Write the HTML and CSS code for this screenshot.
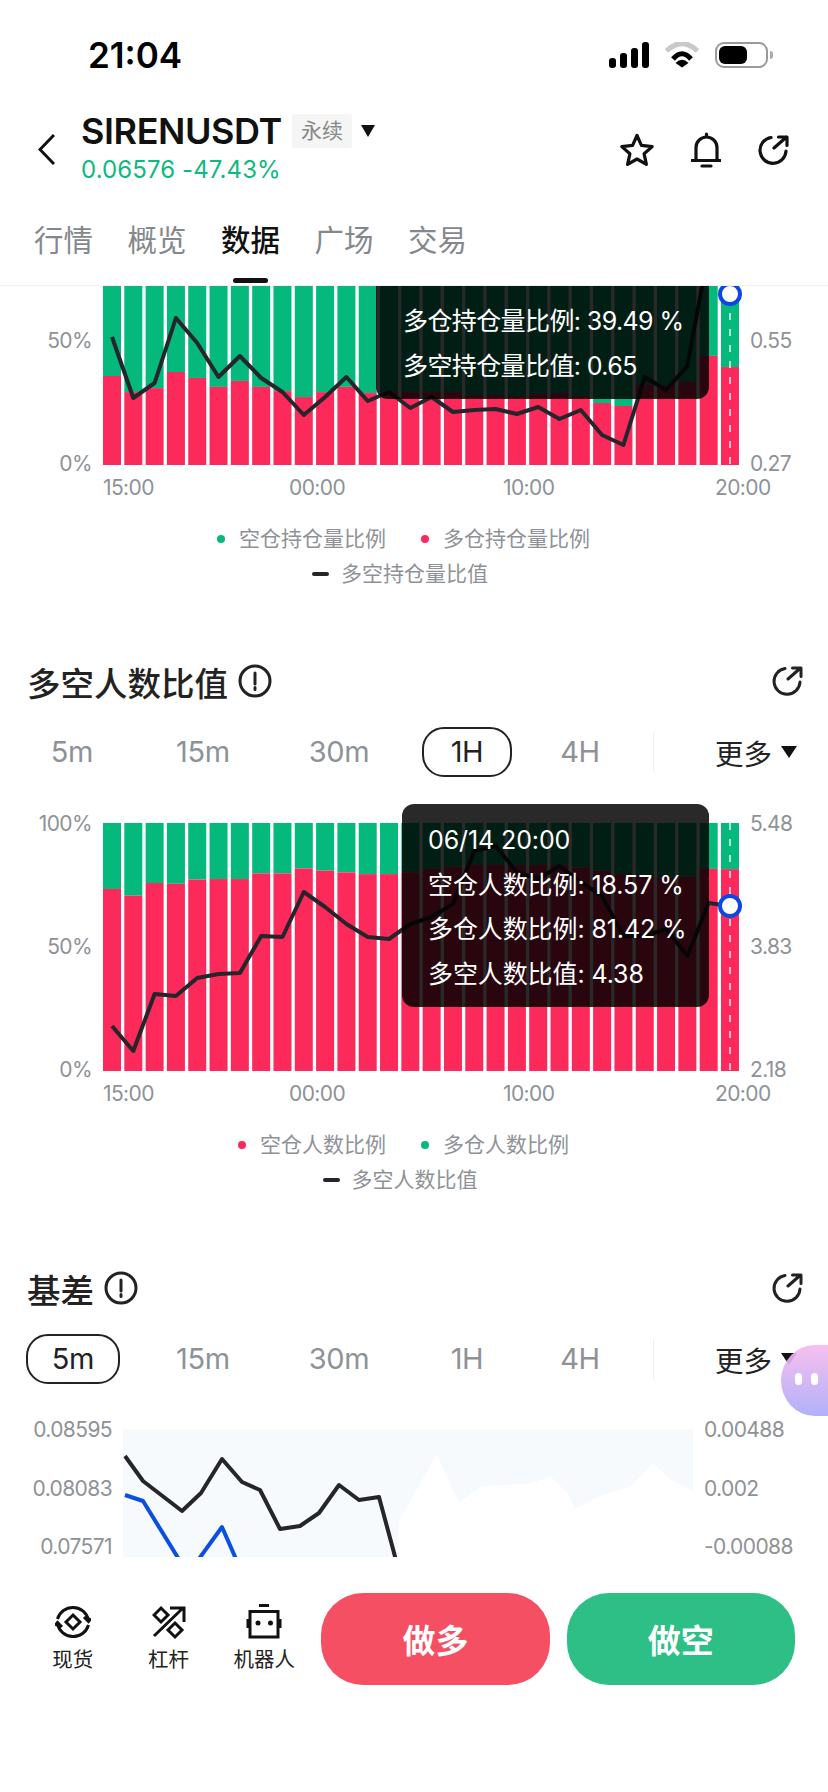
FILE: index.html
```html
<!DOCTYPE html>
<html lang="zh-CN">
<head>
  <meta charset="UTF-8" />
  <title>SIRENUSDT 数据</title>
  <meta name="viewport" content="width=device-width, initial-scale=1.0">
  <link rel="stylesheet" href="styles.css">
</head>
<body>
  <svg class="defs" width="0" height="0">
    <symbol id="share" viewBox="0 0 32 30">
      <path d="M14 2.500A13 13 0 1 0 29 16" />
      <path d="M17 13L29.500 2M21.500 2H30V10.500" />
    </symbol>
    <symbol id="info" viewBox="0 0 34 34">
      <circle cx="17" cy="17" r="15" />
      <path d="M17 9V20M17 23.500V25.500" />
    </symbol>
  </svg>

  <div class="page">
    <header class="top">
      <div class="status">
        <span class="time">21:04</span>
        <div class="status-icons">
          <div class="signal"><i></i><i></i><i></i><i></i></div>
          <svg class="wifi" width="34" height="26" viewBox="0 0 34 26">
            <path d="M1.500 9Q17 -6 32.500 9" fill="none" stroke="#c9c9c9" stroke-width="5" />
            <path d="M8 17Q17 6.500 26 17" fill="none" stroke="#000" stroke-width="5" />
            <path d="M10.500 21Q17 14.500 23.500 21L17 25.500Z" />
          </svg>
          <div class="battery"><i></i></div>
        </div>
      </div>

      <div class="nav">
        <svg class="back" width="17" height="31" viewBox="0 0 17 31">
          <path d="M16 1L2 15.500L16 30" />
        </svg>
        <div class="symbol">
          <div class="symbol-row">
            <h1>SIRENUSDT</h1>
            <span class="badge">永续</span>
            <span class="caret"></span>
          </div>
          <div class="price">0.06576 -47.43%</div>
        </div>
        <div class="nav-icons">
          <svg class="line-icon" width="36" height="34" viewBox="0 0 36 34">
            <path d="M18 2.500L22.400 12.400L33.200 13.600L25.100 20.800L27.400 31.400L18 26L8.600 31.400L10.900 20.800L2.800 13.600L13.600 12.400Z" />
          </svg>
          <svg class="line-icon" width="30" height="36" viewBox="0 0 30 36">
            <path d="M5 28V15.500a10.500 10.500 0 0 1 21 0V28M0.500 28.500H29.500M15.500 2V4.500M11 34H20" />
          </svg>
          <svg class="line-icon" width="32" height="30"><use href="#share" /></svg>
        </div>
      </div>

      <nav class="tabs">
        <a>行情</a>
        <a>概览</a>
        <a class="active">数据</a>
        <a>广场</a>
        <a>交易</a>
      </nav>
    </header>

    <main class="scroll">
      <section class="section-first">
        <div class="chart">
          <div class="axis axis-left"><span></span><span>50%</span><span>0%</span></div>
          <div class="plot">
            <svg id="holdChart" class="bars" viewBox="0 0 636 248"></svg>
            <div class="tooltip tooltip-hold">
              <div>多仓持仓量比例: 39.49 %</div>
              <div>多空持仓量比值: 0.65</div>
            </div>
          </div>
          <div class="axis axis-right"><span></span><span>0.55</span><span>0.27</span></div>
          <div class="x-axis"><span>15:00</span><span>00:00</span><span>10:00</span><span>20:00</span></div>
        </div>
        <div class="legend">
          <div class="legend-row">
            <span class="legend-item"><i class="dot dot-green"></i>空仓持仓量比例</span>
            <span class="legend-item"><i class="dot dot-red"></i>多仓持仓量比例</span>
          </div>
          <div class="legend-row">
            <span class="legend-item"><i class="dash"></i>多空持仓量比值</span>
          </div>
        </div>
      </section>

      <section class="section">
        <div class="section-head">
          <h2>多空人数比值</h2>
          <svg class="line-icon head-info" width="34" height="34"><use href="#info" /></svg>
          <svg class="line-icon head-share" width="32" height="30"><use href="#share" /></svg>
        </div>
        <div class="intervals">
          <span class="interval"><b>5m</b></span>
          <span class="interval"><b>15m</b></span>
          <span class="interval"><b>30m</b></span>
          <span class="interval active"><b>1H</b></span>
          <span class="interval"><b>4H</b></span>
          <span class="divider"></span>
          <span class="more">更多<span class="caret"></span></span>
        </div>
        <div class="chart">
          <div class="axis axis-left"><span>100%</span><span>50%</span><span>0%</span></div>
          <div class="plot">
            <svg id="peopleChart" class="bars" viewBox="0 0 636 248"></svg>
            <div class="tooltip tooltip-people">
              <div>06/14 20:00</div>
              <div>空仓人数比例: 18.57 %</div>
              <div>多仓人数比例: 81.42 %</div>
              <div>多空人数比值: 4.38</div>
            </div>
          </div>
          <div class="axis axis-right"><span>5.48</span><span>3.83</span><span>2.18</span></div>
          <div class="x-axis"><span>15:00</span><span>00:00</span><span>10:00</span><span>20:00</span></div>
        </div>
        <div class="legend">
          <div class="legend-row">
            <span class="legend-item"><i class="dot dot-red"></i>空仓人数比例</span>
            <span class="legend-item"><i class="dot dot-green"></i>多仓人数比例</span>
          </div>
          <div class="legend-row">
            <span class="legend-item"><i class="dash"></i>多空人数比值</span>
          </div>
        </div>
      </section>

      <section class="section section-basis">
        <div class="section-head">
          <h2>基差</h2>
          <svg class="line-icon head-info" width="34" height="34"><use href="#info" /></svg>
          <svg class="line-icon head-share" width="32" height="30"><use href="#share" /></svg>
        </div>
        <div class="intervals">
          <span class="interval active"><b>5m</b></span>
          <span class="interval"><b>15m</b></span>
          <span class="interval"><b>30m</b></span>
          <span class="interval"><b>1H</b></span>
          <span class="interval"><b>4H</b></span>
          <span class="divider"></span>
          <span class="more">更多<span class="caret"></span></span>
        </div>
        <div class="basis-chart">
          <div class="basis-axis basis-left"><span>0.08595</span><span>0.08083</span><span>0.07571</span></div>
          <svg class="basis-plot" width="570" height="128" viewBox="0 0 570 128">
            <path fill="#fff" d="M272 128L277 90L314 25L329 60L337 73L359 57L404 55L428 48L445 65L452 80L477 67L507 58L530 35L547 50L570 62V128Z" />
            <polyline class="line-dark" points="2,27 20,52 59,82 78,64 99,30 119,53 137,61 157,100 177,97 196,84 216,56 236,71 256,68 277,146" />
            <polyline class="line-blue" points="2,66 20,72 65,145 99,98 120,146" />
          </svg>
          <div class="basis-axis basis-right"><span>0.00488</span><span>0.002</span><span>-0.00088</span></div>
        </div>
      </section>
    </main>

    <footer class="tradebar">
      <div class="tool">
        <svg class="line-icon" width="36" height="36" viewBox="0 0 36 36">
          <path d="M2.500 15A16 16 0 0 1 33.500 16M29 13L33.500 17.500L36 14.500M33.500 21A16 16 0 0 1 2.500 20M0 21.500L2.500 18.500L7 23" />
          <path d="M18 11L25 18L18 25L11 18Z" />
        </svg>
        <span>现货</span>
      </div>
      <div class="tool">
        <svg class="line-icon" width="34" height="36" viewBox="0 -2 34 36">
          <path d="M2 30L31 2M18 2H32V16M9 2L16 9L9 16L2 9ZM23 17L30 24L23 31L16 24Z" />
        </svg>
        <span>杠杆</span>
      </div>
      <div class="tool">
        <svg class="line-icon" width="36" height="36" viewBox="0 0 36 36">
          <path d="M4 7.500H32V33H4ZM13 1.500H23M2 15V24M34 15V24" />
          <circle class="eye" cx="12" cy="19" r="2.500" />
          <circle class="eye" cx="24.500" cy="19" r="2.500" />
        </svg>
        <span>机器人</span>
      </div>
      <button class="trade trade-long">做多</button>
      <button class="trade trade-short">做空</button>
    </footer>

    <div class="assistant"><i></i><i></i></div>
  </div>

  <script src="chart.js"></script>
</body>
</html>
```

FILE: styles.css
```css
* {
  box-sizing: border-box;
}
body {
  margin: 0;
  background: white;
  color: #222;
  font-family: Inter, "Noto Sans CJK SC", sans-serif;
}
h1, h2 {
  margin: 0;
}
.defs {
  position: absolute;
}
.page {
  position: relative;
  width: 828px;
  height: 1792px;
  display: flex;
  flex-direction: column;
  overflow: hidden;
}
.line-icon {
  fill: none;
  stroke: #111;
  stroke-width: 3.2;
  stroke-linejoin: round;
  stroke-linecap: round;
  flex: none;
}

/* top */
.top {
  height: 286px;
  flex: none;
  border-bottom: 1px solid #f1f1f1;
  background: white;
}
.status {
  height: 110px;
  padding: 0 60px 0 88px;
  display: flex;
  align-items: center;
  justify-content: space-between;
}
.time {
  font-size: 35px;
  font-weight: 600;
  color: #000;
}
.status-icons {
  display: flex;
  align-items: center;
  gap: 16px;
}
.signal {
  display: flex;
  align-items: flex-end;
  gap: 4px;
  height: 26px;
}
.signal i {
  width: 7px;
  background: #000;
  border-radius: 3px;
}
.signal i:nth-child(1) { height: 10px; }
.signal i:nth-child(2) { height: 15px; }
.signal i:nth-child(3) { height: 20px; }
.signal i:nth-child(4) { height: 26px; }
.battery {
  position: relative;
  width: 53px;
  height: 26px;
  border: 2px solid #9a9a9a;
  border-radius: 9px;
  padding: 2px;
}
.battery::after {
  content: "";
  position: absolute;
  left: 53px;
  top: 7px;
  width: 3px;
  height: 8px;
  background: #aaa;
  border-radius: 0 3px 3px 0;
}
.battery i {
  display: block;
  width: 28px;
  height: 18px;
  background: #000;
  border-radius: 6px;
}

.nav {
  height: 78px;
  padding: 0 39px 0 38px;
  display: flex;
  align-items: center;
}
.back {
  fill: none;
  stroke: #111;
  stroke-width: 3;
  flex: none;
  margin-right: 26px;
}
.symbol-row {
  display: flex;
  align-items: center;
}
.symbol h1 {
  font-size: 36px;
  font-weight: 600;
  line-height: 40px;
  color: #111;
  letter-spacing: -0.4px;
}
.badge {
  margin-left: 10px;
  padding: 0 9px;
  height: 34px;
  line-height: 34px;
  background: #f5f5f5;
  border-radius: 3px;
  color: #888;
  font-size: 21px;
}
.symbol-row .caret {
  margin-left: 9px;
  border-left-width: 7.500px;
  border-right-width: 7.500px;
}
.caret {
  display: inline-block;
  border-left: 8px solid transparent;
  border-right: 8px solid transparent;
  border-top: 12px solid #111;
}
.price {
  margin-top: 2px;
  font-size: 24px;
  line-height: 34px;
  color: #0fb880;
  letter-spacing: 0.1px;
}
.nav-icons {
  margin-left: auto;
  margin-top: 2px;
  display: flex;
  align-items: center;
  gap: 36px;
}

.tabs {
  margin-top: 34px;
  padding-left: 34px;
  display: flex;
  gap: 34.500px;
}
.tabs a {
  display: flex;
  flex-direction: column;
  align-items: center;
  font-size: 29.500px;
  line-height: 36px;
  color: #84888d;
}
.tabs a.active {
  color: #111;
  font-weight: 500;
}
.tabs a.active::after {
  content: "";
  width: 35px;
  height: 5px;
  margin-top: 20px;
  background: #111;
  border-radius: 3px;
}

/* charts */
.scroll {
  flex: 1;
  overflow: hidden;
}
.section-first {
  margin-top: -69px;
}
.section {
  margin-top: 73px;
}
.section-head {
  height: 40px;
  padding: 0 25px 0 27px;
  display: flex;
  align-items: center;
  gap: 10px;
}
.section-head h2 {
  font-size: 33.500px;
  font-weight: 500;
  color: #222;
}
.head-info {
  stroke: #222;
  stroke-width: 3;
}
.head-share {
  margin-left: auto;
  stroke: #222;
  stroke-width: 3;
}
.intervals {
  margin-top: 26px;
  padding: 0 31px 0 26px;
  height: 50px;
  display: grid;
  grid-template-columns: 92px 170px 102px 154px 72px 74px 1fr;
  align-items: center;
  justify-items: center;
  font-size: 29px;
  letter-spacing: -0.3px;
  color: #8e9297;
}
.interval b {
  display: block;
  min-width: 90px;
  height: 50px;
  line-height: 46px;
  text-align: center;
  font-weight: 400;
  border: 2px solid transparent;
  border-radius: 22px;
}
.interval.active b {
  border-color: #222;
  color: #222;
}
.section-basis .interval.active b {
  min-width: 94px;
  margin-left: 2px;
}
.divider {
  width: 1px;
  height: 40px;
  background: #eee;
}
.more {
  justify-self: end;
  display: flex;
  align-items: center;
  gap: 9px;
  font-size: 28.500px;
  letter-spacing: 0;
  color: #222;
}
.chart {
  margin-top: 46px;
  display: grid;
  grid-template-columns: 103px 636px 89px;
}
.section-first .chart {
  margin-top: 0;
}
.axis {
  margin: -12px 0 -12px;
  display: flex;
  flex-direction: column;
  justify-content: space-between;
  font-size: 21px;
  letter-spacing: -0.6px;
  color: #8e9297;
}
.axis span {
  height: 26px;
  line-height: 26px;
}
.axis-left {
  text-align: right;
  padding-right: 11px;
}
.axis-right {
  padding-left: 11px;
}
.plot {
  position: relative;
  height: 248px;
}
.bars {
  display: block;
  width: 636px;
  height: 248px;
  overflow: visible;
}
.x-axis {
  grid-column: 2 / 4;
  margin-top: 11px;
  display: grid;
  grid-template-columns: 186px 214px 212px auto;
  font-size: 21px;
  letter-spacing: -0.6px;
  line-height: 24px;
  color: #8e9297;
}
.tooltip {
  position: absolute;
  display: flex;
  flex-direction: column;
  justify-content: flex-end;
  padding-bottom: 11px;
  background: rgba(0, 0, 0, 0.84);
  border-radius: 12px;
  color: white;
  font-size: 25px;
  line-height: 44.500px;
}
.tooltip-hold {
  left: 273px;
  top: -21px;
  bottom: 66px;
  width: 333px;
  padding-left: 27px;
  letter-spacing: -0.6px;
}
.tooltip-people {
  left: 299px;
  top: -19px;
  width: 307px;
  height: 203px;
  padding-left: 26px;
  letter-spacing: -0.1px;
}
.legend {
  margin-top: 25px;
  padding-right: 21px;
  display: flex;
  flex-direction: column;
  gap: 7px;
  font-size: 21px;
  line-height: 28px;
  color: #8e9297;
}
.legend-row {
  display: flex;
  justify-content: center;
  gap: 35px;
}
.legend-row + .legend-row {
  padding-right: 7px;
}
.legend-item {
  display: flex;
  align-items: center;
}
.dot {
  width: 8px;
  height: 8px;
  margin-right: 14px;
  border-radius: 50%;
}
.dot-green { background: #05b87c; }
.dot-red { background: #fc2a5a; }
.dash {
  width: 17px;
  height: 4px;
  margin-right: 12px;
  background: #26252b;
  border-radius: 2px;
}

.section-basis {
  margin-top: 74px;
}
.basis-chart {
  margin-top: 45px;
  display: flex;
}
.basis-axis {
  margin-top: -9px;
  display: flex;
  flex-direction: column;
  gap: 38.500px;
  font-size: 21px;
  letter-spacing: -0.6px;
  line-height: 20px;
  color: #8e9297;
}
.basis-left {
  width: 123px;
  padding-right: 11px;
  text-align: right;
}
.basis-right {
  padding-left: 11px;
}
.basis-plot {
  flex: none;
  background: #f7fafd;
}
.line-dark, .line-blue {
  fill: none;
  stroke-width: 4;
  stroke-linejoin: round;
}
.line-dark { stroke: #26252b; }
.line-blue { stroke: #0b4fe0; }

/* bottom bar */
.tradebar {
  height: 234px;
  flex: none;
  padding: 35px 33px 0 25px;
  display: flex;
  align-items: flex-start;
  background: white;
}
.tool {
  width: 96px;
  height: 92px;
  padding-top: 11px;
  display: flex;
  flex-direction: column;
  align-items: center;
  font-size: 20.500px;
  line-height: 28px;
  color: #222;
}
.tool span {
  margin-top: 6px;
}
.tool .line-icon {
  stroke-width: 3;
  stroke-linecap: butt;
  stroke-linejoin: miter;
}
.eye {
  fill: #111;
  stroke: none;
}
.trade {
  width: 229px;
  height: 92px;
  border: none;
  border-radius: 42px;
  color: white;
  font-family: inherit;
  font-size: 33px;
  font-weight: 700;
}
.trade-long {
  margin-left: 9px;
  background: #f54f64;
}
.trade-short {
  margin-left: 17px;
  background: #2dbf85;
}

.assistant {
  position: absolute;
  right: 0;
  top: 1345px;
  width: 47px;
  height: 71px;
  padding: 28px 10px 0 14px;
  display: flex;
  justify-content: space-between;
  align-items: flex-start;
  border-radius: 34px 0 0 34px / 36px 0 0 36px;
  background: linear-gradient(#f8b9ee, #a9a8fa);
  opacity: 0.9;
}
.assistant i {
  width: 7px;
  height: 12px;
  background: white;
  border-radius: 4px;
}
```

FILE: chart.js
```js
const NS = 'http://www.w3.org/2000/svg';
const STEP = 21.31;
const BAR_W = 18;
const H = 248;

// share of the red part of each bar, line y in plot pixels
const charts = {
  holdChart: {
    red: [35.9, 29.4, 31, 37.5, 35.1, 31.5, 33.9, 31.5, 29.8, 27.4, 29.4, 31.5, 29, 29.4, 29.4,
      29.4, 29.4, 28.2, 28.2, 27.8, 28.6, 29, 27.8, 25, 23.8, 32.3, 32.3, 33.5, 44, 39.5],
    line: [120, 181, 166, 101, 126, 160, 139, 161, 175, 198, 180, 160, 184, 175, 191,
      180, 195, 193, 192, 197, 190, 202, 193, 218, 228, 160, 173, 149, 33, 77]
  },
  peopleChart: {
    red: [73.4, 70.7, 75.8, 75.5, 77.2, 77.4, 77.4, 79.7, 79.7, 81.7, 80.8, 80.1, 79.4, 79.4, 80.1,
      81.5, 82.5, 83.1, 83.1, 83.1, 83.1, 83.1, 82.1, 80.8, 79.4, 78.5, 78.1, 78.5, 81.5, 81.4],
    line: [203, 228, 171, 173, 155, 151, 150, 113, 114, 69, 84, 101, 114, 116, 101,
      94, 81, 28, 23, 49, 56, 43, 59, 73, 113, 113, 106, 133, 80, 83]
  }
};

function add(svg, tag, attrs) {
  const el = document.createElementNS(NS, tag);
  for (const k in attrs) el.setAttribute(k, attrs[k]);
  svg.appendChild(el);
}

for (const id in charts) {
  const svg = document.getElementById(id);
  const c = charts[id];

  c.red.forEach((pct, i) => {
    const x = i * STEP;
    const h = H * pct / 100;
    add(svg, 'rect', { x, y: 0, width: BAR_W, height: H - h, fill: '#05b87c' });
    add(svg, 'rect', { x, y: H - h, width: BAR_W, height: h, fill: '#fc2a5a' });
  });

  const cx = i => (i * STEP + BAR_W / 2).toFixed(1);
  const last = c.line.length - 1;

  add(svg, 'line', {
    x1: cx(last), x2: cx(last), y1: 0, y2: H,
    stroke: '#fff', 'stroke-width': 2, 'stroke-dasharray': '7 9', opacity: 0.7
  });
  add(svg, 'polyline', {
    points: c.line.map((y, i) => cx(i) + ',' + y).join(' '),
    fill: 'none', stroke: '#26252b', 'stroke-width': 4, 'stroke-linejoin': 'round'
  });
  add(svg, 'circle', {
    cx: cx(last), cy: c.line[last], r: 10,
    fill: '#fff', stroke: '#0f46e0', 'stroke-width': 4
  });
}
```
